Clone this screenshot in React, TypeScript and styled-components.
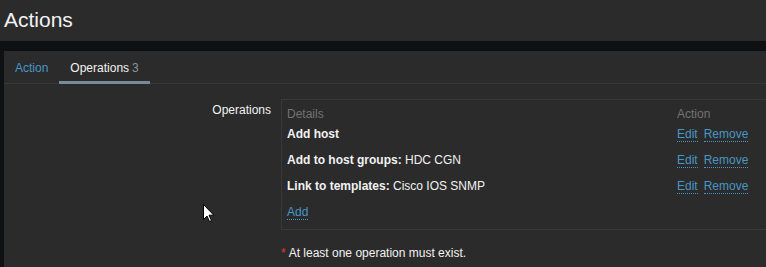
import React from "react";
import styled, { createGlobalStyle } from "styled-components";

const GlobalStyle = createGlobalStyle`
  html, body {
    margin: 0;
    padding: 0;
    background: #0e1012;
    overflow: hidden;
  }
  body {
    font-family: "Liberation Sans", Arial, sans-serif;
    font-size: 12px;
    color: #f2f2f2;
  }
`;

const Page = styled.div`
  position: relative;
  width: 766px;
  height: 267px;
  overflow: hidden;
`;

const Header = styled.header`
  height: 41px;
  background: #2b2b2b;
  display: flex;
  align-items: center;
  padding-left: 4px;
`;

const Title = styled.h1`
  margin: 0 0 2px;
  font-size: 21px;
  font-weight: normal;
  line-height: 24px;
  color: #f2f2f2;
`;

const Content = styled.main`
  padding: 10px 0 0 4px;
`;

const Panel = styled.section`
  background: #2b2b2b;
  width: 800px;
  height: 230px;
`;

const TabNav = styled.ul`
  display: flex;
  list-style: none;
  margin: 0;
  padding: 0;
  height: 32px;
  border-bottom: 1px solid #383838;
`;

const Tab = styled.li<{ active?: boolean }>`
  padding: 4px 11px 0;
  line-height: 26px;
  height: 26px;
  margin-bottom: -1px;
  border-bottom: 3px solid ${(p) => (p.active ? "#768d99" : "transparent")};
  color: ${(p) => (p.active ? "#f2f2f2" : "#4796c4")};
`;

const Count = styled.span`
  color: #8a9399;
  margin-left: 3px;
`;

const Form = styled.div`
  display: grid;
  grid-template-columns: 267px 500px;
  column-gap: 10px;
  row-gap: 16px;
  padding-top: 15px;
`;

const Label = styled.label`
  text-align: right;
  padding-top: 4px;
  line-height: 14px;
`;

const OpsBox = styled.div`
  border: 1px solid #383838;
  padding: 7px 0 4px 5px;
`;

const OpsRow = styled.div<{ head?: boolean }>`
  display: grid;
  grid-template-columns: 390px auto;
  align-items: center;
  height: ${(p) => (p.head ? "14px" : "26px")};
  line-height: 14px;
  color: ${(p) => (p.head ? "#737373" : "#f2f2f2")};
`;

const Strong = styled.b`
  font-weight: bold;
`;

const Actions = styled.div`
  display: flex;
  gap: 6px;
`;

const Link = styled.a`
  color: #4796c4;
  text-decoration: none;
  border-bottom: 1px dotted #4796c4;
  line-height: 14px;
  cursor: pointer;
`;

const Note = styled.div`
  grid-column: 2;
  line-height: 14px;
`;

const Asterisk = styled.span`
  color: #e33734;
  margin-right: 3px;
`;

const Cursor = styled.svg`
  position: absolute;
  left: 203px;
  top: 204px;
`;

const operations = [
  { label: "Add host", value: "" },
  { label: "Add to host groups:", value: " HDC CGN" },
  { label: "Link to templates:", value: " Cisco IOS SNMP" },
];

export default function App() {
  return (
    <Page>
      <GlobalStyle />
      <Header>
        <Title>Actions</Title>
      </Header>
      <Content>
        <Panel>
          <TabNav>
            <Tab>Action</Tab>
            <Tab active>
              Operations<Count>3</Count>
            </Tab>
          </TabNav>
          <Form>
            <Label>Operations</Label>
            <OpsBox>
              <OpsRow head>
                <span>Details</span>
                <span>Action</span>
              </OpsRow>
              {operations.map((op) => (
                <OpsRow key={op.label}>
                  <span>
                    <Strong>{op.label}</Strong>
                    {op.value}
                  </span>
                  <Actions>
                    <Link>Edit</Link>
                    <Link>Remove</Link>
                  </Actions>
                </OpsRow>
              ))}
              <OpsRow>
                <span>
                  <Link>Add</Link>
                </span>
              </OpsRow>
            </OpsBox>
            <Note>
              <Asterisk>*</Asterisk>At least one operation must exist.
            </Note>
          </Form>
        </Panel>
      </Content>
      <Cursor width="12" height="19" viewBox="0 0 12 19">
        <path
          d="M0.5 0.5 L0.5 15.5 L4 12 L6.5 17.5 L8.5 16.6 L6 11.2 L10.8 11.2 Z"
          fill="#ffffff"
          stroke="#000000"
          strokeWidth="1"
          strokeLinejoin="miter"
        />
      </Cursor>
    </Page>
  );
}
